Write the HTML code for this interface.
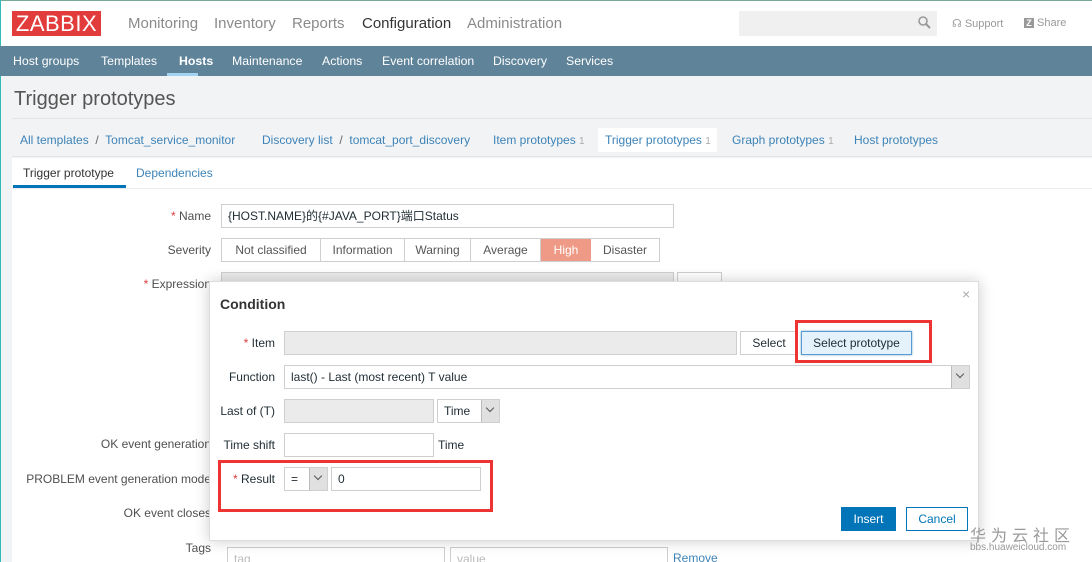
<!DOCTYPE html>
<html><head><meta charset="utf-8"><style>
*{box-sizing:border-box;margin:0;padding:0}
html,body{width:1092px;height:562px;overflow:hidden}
body{background:#f2f3f5;font-family:"Liberation Sans","Noto Sans CJK SC",sans-serif;font-size:12px;color:#1f2c33;position:relative}
.a{position:absolute;white-space:nowrap}
.lnk{color:#3d83b7}
.inp{position:absolute;border:1px solid #cfcfcf;background:#fff;height:24px;line-height:22px;padding-left:6px;font-size:12px}
.dis{background:#ebebeb}
.btn{position:absolute;border:1px solid #cfcfcf;background:#fff;height:24px;line-height:22px;text-align:center;font-size:12px;color:#1f2c33}
.sel{position:absolute;width:18px;height:22px;background:#e0e0e0;border-left:1px solid #bbb;right:0;top:0}
.sel:after{content:"";position:absolute;left:5px;top:5px;width:5px;height:5px;border-right:1.5px solid #555;border-bottom:1.5px solid #555;transform:rotate(45deg)}
.lbl{position:absolute;text-align:right;color:#4f4f4f;font-size:12px}
.req{color:#dc3c3c}
</style></head><body>
<div class="a" style="left:0;top:0;width:1092px;height:46px;background:#fff;border-top:1px solid #7a9;"></div>
<div class="a" style="left:0;top:0;width:1px;height:562px;background:#3bb"></div>
<div class="a" style="left:12px;top:11px;width:89px;height:25px;background:#e23b3b;color:#fff;font-size:22px;line-height:25px;text-align:center;letter-spacing:0.5px">ZABBIX</div>
<div class="a" style="left:128px;top:15px;font-size:15px;color:#8a8a8a">Monitoring</div>
<div class="a" style="left:214px;top:15px;font-size:15px;color:#8a8a8a">Inventory</div>
<div class="a" style="left:292px;top:15px;font-size:15px;color:#8a8a8a">Reports</div>
<div class="a" style="left:362px;top:15px;font-size:15px;color:#333">Configuration</div>
<div class="a" style="left:467px;top:15px;font-size:15px;color:#8a8a8a">Administration</div>
<div class="a" style="left:739px;top:11px;width:198px;height:25px;background:#f0f0f0"></div>
<svg class="a" style="left:917px;top:15px" width="14" height="14"><circle cx="6" cy="6" r="4" fill="none" stroke="#999" stroke-width="1.6"/><line x1="9" y1="9" x2="13" y2="13" stroke="#999" stroke-width="2"/></svg>
<div class="a" style="left:952px;top:17px;font-size:11px;color:#999">☊ Support</div>
<div class="a" style="left:1024px;top:17px;font-size:11px;color:#999"><span style="display:inline-block;width:10px;height:10px;background:#999;color:#fff;font-size:9px;line-height:10px;text-align:center;font-weight:bold">Z</span> Share</div>
<div class="a" style="left:0;top:46px;width:1092px;height:30px;background:#5f8399"></div>
<div class="a" style="left:395px;top:40px;width:0;height:0;border:6px solid transparent;border-bottom-color:#5f8399"></div>
<div class="a" style="left:13px;top:54px;color:#fff;font-size:12.3px">Host groups</div>
<div class="a" style="left:101px;top:54px;color:#fff;font-size:12.3px">Templates</div>
<div class="a" style="left:179px;top:54px;color:#fff;font-weight:bold;font-size:12.3px">Hosts</div>
<div class="a" style="left:167px;top:73px;width:31px;height:3px;background:#a4d3f1"></div>
<div class="a" style="left:232px;top:54px;color:#fff;font-size:12.3px">Maintenance</div>
<div class="a" style="left:322px;top:54px;color:#fff;font-size:12.3px">Actions</div>
<div class="a" style="left:382px;top:54px;color:#fff;font-size:12.3px">Event correlation</div>
<div class="a" style="left:493px;top:54px;color:#fff;font-size:12.3px">Discovery</div>
<div class="a" style="left:566px;top:54px;color:#fff;font-size:12.3px">Services</div>
<div class="a" style="left:14px;top:88px;font-size:20px;color:#555">Trigger prototypes</div>
<div class="a" style="left:12px;top:118px;width:1080px;height:39px;border-top:1px solid #e4e4e4;border-bottom:1px solid #e4e4e4"></div>
<div class="a lnk" style="left:20px;top:133px">All templates <span style="color:#666">&nbsp;/&nbsp;</span> Tomcat_service_monitor</div>
<div class="a lnk" style="left:262px;top:133px">Discovery list <span style="color:#666">&nbsp;/&nbsp;</span> tomcat_port_discovery</div>
<div class="a lnk" style="left:493px;top:133px">Item prototypes <span style="color:#aaa;font-size:10px">1</span></div>
<div class="a" style="left:598px;top:128px;width:119px;height:24px;background:#fff"></div>
<div class="a lnk" style="left:605px;top:133px">Trigger prototypes <span style="color:#aaa;font-size:10px">1</span></div>
<div class="a lnk" style="left:732px;top:133px">Graph prototypes <span style="color:#aaa;font-size:10px">1</span></div>
<div class="a lnk" style="left:854px;top:133px">Host prototypes</div>
<div class="a" style="left:12px;top:158px;width:1080px;height:404px;background:#fff"></div>
<div class="a" style="left:12px;top:188px;width:1080px;height:1px;background:#ebebeb"></div>
<div class="a" style="left:23px;top:166px;color:#333">Trigger prototype</div>
<div class="a" style="left:13px;top:185px;width:113px;height:3px;background:#0275b8"></div>
<div class="a lnk" style="left:136px;top:166px">Dependencies</div>
<div class="lbl" style="left:100px;width:111px;top:209px"><span class="req">* </span>Name</div>
<div class="inp" style="left:221px;top:204px;width:453px">{HOST.NAME}的{#JAVA_PORT}端口Status</div>
<div class="lbl" style="left:100px;width:111px;top:243px">Severity</div>
<div class="a" style="left:221px;top:238px;width:439px;height:24px;border:1px solid #cfcfcf;display:flex;font-size:12px;line-height:22px;color:#555;background:#fff">
<span style="width:99px;text-align:center;border-right:1px solid #cfcfcf">Not classified</span><span style="width:84px;text-align:center;border-right:1px solid #cfcfcf">Information</span><span style="width:66px;text-align:center;border-right:1px solid #cfcfcf">Warning</span><span style="width:70px;text-align:center;border-right:1px solid #cfcfcf">Average</span><span style="width:50px;text-align:center;background:#ee9a86;color:#fff">High</span><span style="flex:1;text-align:center">Disaster</span></div>
<div class="lbl" style="left:100px;width:111px;top:277px"><span class="req">* </span>Expression</div>
<div class="inp dis" style="left:221px;top:272px;width:453px"></div>
<div class="btn" style="left:677px;top:272px;width:45px"></div>
<div class="lbl" style="left:20px;width:191px;top:437px">OK event generation</div>
<div class="lbl" style="left:20px;width:191px;top:472px">PROBLEM event generation mode</div>
<div class="lbl" style="left:20px;width:191px;top:506px">OK event closes</div>
<div class="lbl" style="left:20px;width:191px;top:541px">Tags</div>
<div class="inp" style="left:227px;top:547px;width:218px;color:#bbb">tag</div>
<div class="inp" style="left:450px;top:547px;width:218px;color:#bbb">value</div>
<div class="a lnk" style="left:673px;top:551px">Remove</div>
<div class="a" style="left:209px;top:281px;width:770px;height:260px;background:#fff;border:1px solid #ddd;box-shadow:0 0 14px rgba(0,0,0,.2)">
<div class="a" style="left:10px;top:14px;font-size:14px;font-weight:bold;color:#333">Condition</div>
<div class="a" style="left:752px;top:4px;font-size:14px;color:#aaa">×</div>
<div class="lbl" style="left:0;width:65px;top:54px;color:#1f2c33"><span class="req">* </span>Item</div>
<div class="inp dis" style="left:74px;top:49px;width:453px"></div>
<div class="btn" style="left:530px;top:49px;width:58px">Select</div>
<div class="btn" style="left:591px;top:49px;width:111px;background:#e4f2fc;border-color:#5a9bd5;box-shadow:0 0 2px #7ab">Select prototype</div>
<div class="a" style="left:585px;top:38px;width:137px;height:43px;border:3px solid #e33"></div>
<div class="lbl" style="left:0;width:65px;top:88px;color:#1f2c33">Function</div>
<div class="inp" style="left:74px;top:83px;width:686px">last() - Last (most recent) T value<div class="sel"></div></div>
<div class="lbl" style="left:0;width:65px;top:122px;color:#1f2c33">Last of (T)</div>
<div class="inp dis" style="left:74px;top:117px;width:150px"></div>
<div class="inp" style="left:227px;top:117px;width:63px">Time<div class="sel"></div></div>
<div class="lbl" style="left:0;width:65px;top:156px;color:#1f2c33">Time shift</div>
<div class="inp" style="left:74px;top:151px;width:150px"></div>
<div class="a" style="left:228px;top:156px">Time</div>
<div class="lbl" style="left:0;width:65px;top:190px;color:#1f2c33"><span class="req">* </span>Result</div>
<div class="inp" style="left:74px;top:185px;width:44px">=<div class="sel"></div></div>
<div class="inp" style="left:121px;top:185px;width:150px">0</div>
<div class="a" style="left:8px;top:178px;width:275px;height:52px;border:3px solid #e33"></div>
<div class="btn" style="left:631px;top:225px;width:55px;background:#0275b8;border-color:#0275b8;color:#fff">Insert</div>
<div class="btn" style="left:696px;top:225px;width:62px;border-color:#0275b8;color:#0275b8">Cancel</div>
</div>
<div class="a" style="left:970px;top:522px;font-size:16px;color:#999;letter-spacing:5px">华为云社区</div>
<div class="a" style="left:970px;top:542px;font-size:10px;color:#999">bbs.huaweicloud.com</div>
</body></html>
